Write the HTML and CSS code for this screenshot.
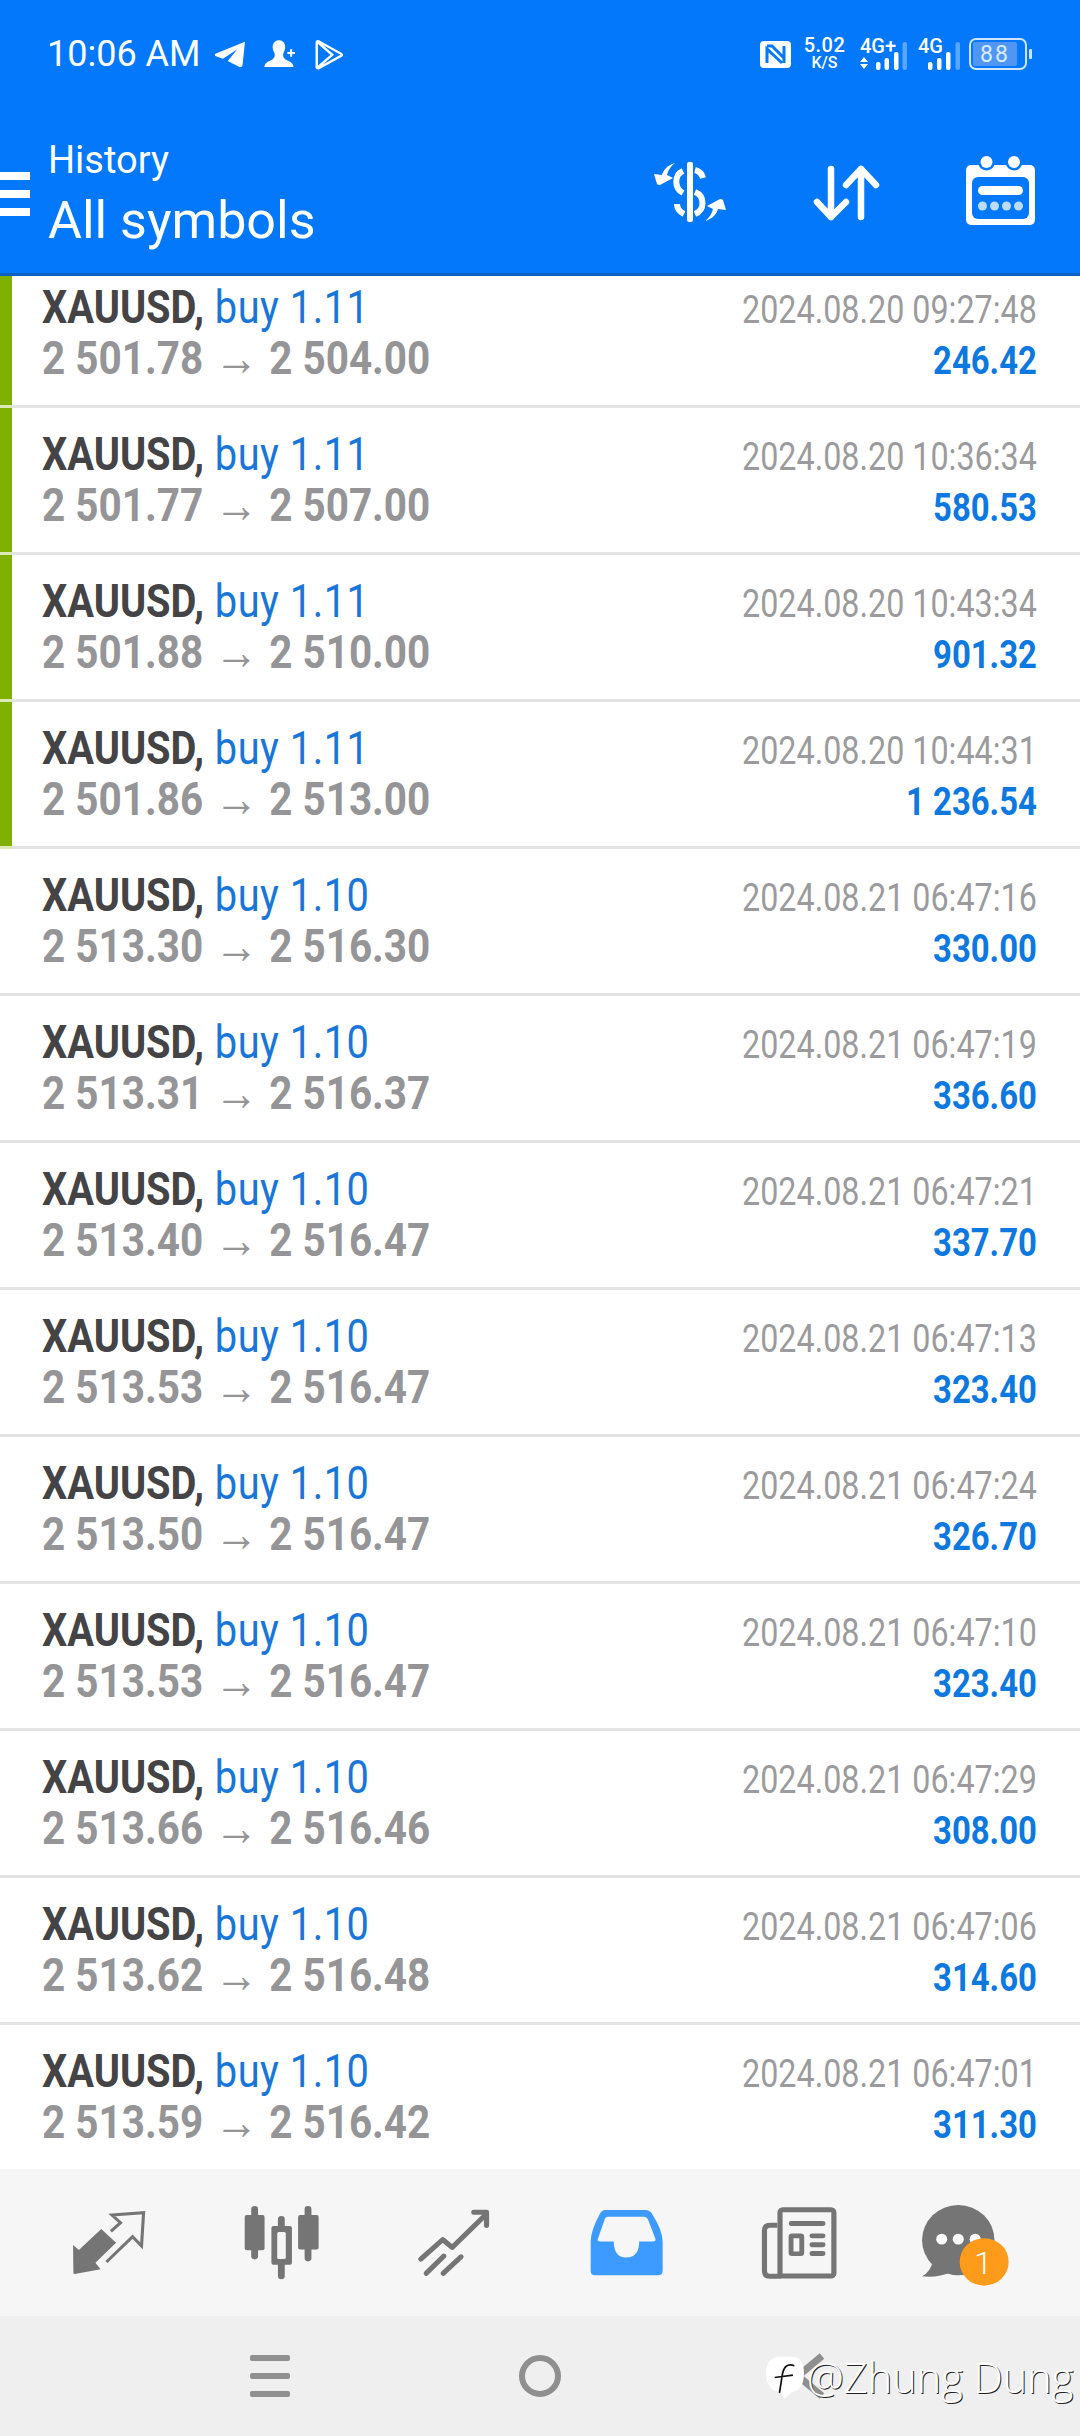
FILE: index.html
```html
<!DOCTYPE html>
<html lang="en">
<head>
    <meta charset="UTF-8">
    <title>History</title>
    <link rel="stylesheet" href="styles.css">
</head>
<body>
<div class="app">
    <header class="header">
        <div class="status">
            <div class="status-left">
                <span class="clock">10:06 AM</span>
                <svg class="ic-telegram" viewBox="625 125 90 82" preserveAspectRatio="none"><path d="M712 127 L626 164 Q622 168 628 171 L648 179 L690 150 L662 186 L696 204 Q704 206 705 198 Z"/></svg>
                <svg class="ic-person" viewBox="765 127 92 84" preserveAspectRatio="none"><path d="M808 128 C790 128 786 148 794 164 C798 172 796 180 790 185 C782 191 768 192 766 208 L850 208 C848 192 834 191 826 185 C820 180 818 172 822 164 C830 148 826 128 808 128Z"/><path d="M832 166 H854 M843 155 V177" class="thin"/></svg>
                <svg class="ic-play" viewBox="912 115 84 94" preserveAspectRatio="none"><path d="M922 122 L988 160 Q992 163 988 166 L922 204 Q917 205 917 200 V126 Q917 121 922 122Z M919 124 L962 163 L919 202" class="line"/></svg>
            </div>
            <div class="status-right">
                <svg class="ic-nfc" viewBox="0 0 31 27"><rect width="31" height="27" rx="4" fill="#fff"/><path d="M7 22 V8 L22 22 M24 5 V22 M7 5 H12 L24 17" fill="none" stroke="#0478fb" stroke-width="3"/></svg>
                <div class="speed"><span class="speed-num">5.02</span><span class="speed-unit">K/S</span></div>
                <svg class="ic-signal w47" viewBox="0 -6 47 38">
                    <text x="0" y="15" class="sig-text">4G+</text>
                    <path d="M4 19 L8 24 H0Z M4 31 L8 26 H0Z" fill="#fff"/>
                    <rect x="16" y="24" width="4.5" height="8" rx="2" fill="#fff"/>
                    <rect x="24.5" y="20" width="4.5" height="12" rx="2" fill="#fff"/>
                    <rect x="34" y="14" width="4.5" height="18" rx="2" fill="#fff"/>
                    <rect x="42.5" y="4" width="4.5" height="28" rx="2" fill="#5aa5ff"/>
                </svg>
                <svg class="ic-signal w42" viewBox="0 -6 42 38">
                    <text x="0" y="15" class="sig-text">4G</text>
                    <rect x="10" y="24" width="4.5" height="8" rx="2" fill="#fff"/>
                    <rect x="19" y="20" width="4.5" height="12" rx="2" fill="#fff"/>
                    <rect x="28" y="14" width="4.5" height="18" rx="2" fill="#fff"/>
                    <rect x="37.5" y="4" width="4.5" height="28" rx="2" fill="#5aa5ff"/>
                </svg>
                <svg class="ic-battery" viewBox="0 0 63 32">
                    <rect x="1" y="1" width="56" height="30" rx="6" fill="none" stroke="#cfe4ff" stroke-width="2"/>
                    <rect x="4" y="4" width="44" height="24" rx="2" fill="#4f96f5"/>
                    <text x="26" y="24" class="bat-text">88</text>
                    <rect x="60" y="11" width="3" height="10" rx="1" fill="#cfe4ff"/>
                </svg>
            </div>
        </div>
        <div class="toolbar">
            <div class="burger"><span></span><span></span><span></span></div>
            <div class="titles">
                <div class="title-small">History</div>
                <div class="title-big">All symbols</div>
            </div>
            <div class="actions">
                <svg class="ic-dollar" viewBox="0 0 72 60">
                    <rect x="33" y="0" width="6" height="60" rx="2" fill="#fff"/>
                    <path d="M29 9 C20 13 20 26 29 31 M41 8 C45 9 48 12 49 16 M41 30 C51 34 51 48 41 52 M23 42 C23 47 26 50 30 52" fill="none" stroke="#fff" stroke-width="6"/>
                    <path d="M21 1 C13 3 9 9 8 13 L0 12 L3 22 C4 23 5 23 6 23 L19 16 L13 13 C14 8 17 4 21 1Z" fill="#fff"/>
                    <path d="M21 1 C13 3 9 9 8 13 L0 12 L3 22 C4 23 5 23 6 23 L19 16 L13 13 C14 8 17 4 21 1Z" fill="#fff" transform="rotate(180 36 30)"/>
                </svg>
                <svg class="ic-sort" viewBox="810 160 72 62">
                    <path d="M831 169 V217 M817 202 L831 217 L846 202 M861 217 V169 M846 185 L861 169 L876 185" fill="none" stroke="#fff" stroke-width="6.5" stroke-linecap="round" stroke-linejoin="round"/>
                </svg>
                <svg class="ic-calendar" viewBox="966 153 69 72">
                    <rect x="966" y="165" width="69" height="60" rx="5" fill="#fff"/>
                    <rect x="972" y="177" width="57" height="42" rx="6" fill="#0478fb"/>
                    <circle cx="986.5" cy="162" r="8.5" fill="#0478fb"/>
                    <circle cx="1014" cy="162" r="8.5" fill="#0478fb"/>
                    <circle cx="986.5" cy="162" r="6" fill="#fff"/>
                    <circle cx="1014" cy="162" r="6" fill="#fff"/>
                    <rect x="978" y="186" width="45" height="9" rx="4.5" fill="#fff"/>
                    <circle cx="982.5" cy="206" r="4.5" fill="#bcdcff"/>
                    <circle cx="994.5" cy="206" r="4.5" fill="#bcdcff"/>
                    <circle cx="1006.5" cy="206" r="4.5" fill="#bcdcff"/>
                    <circle cx="1018.5" cy="206" r="4.5" fill="#bcdcff"/>
                </svg>
            </div>
        </div>
    </header>

    <main class="list">
        <div class="row closed first">
            <div class="deal"><b>XAUUSD,</b> <span class="side">buy 1.11</span></div>
            <div class="time">2024.08.20 09:27:48</div>
            <div class="price">2 501.78<span class="arrow">→</span>2 504.00</div>
            <div class="profit">246.42</div>
        </div>
        <div class="row closed">
            <div class="deal"><b>XAUUSD,</b> <span class="side">buy 1.11</span></div>
            <div class="time">2024.08.20 10:36:34</div>
            <div class="price">2 501.77<span class="arrow">→</span>2 507.00</div>
            <div class="profit">580.53</div>
        </div>
        <div class="row closed">
            <div class="deal"><b>XAUUSD,</b> <span class="side">buy 1.11</span></div>
            <div class="time">2024.08.20 10:43:34</div>
            <div class="price">2 501.88<span class="arrow">→</span>2 510.00</div>
            <div class="profit">901.32</div>
        </div>
        <div class="row closed">
            <div class="deal"><b>XAUUSD,</b> <span class="side">buy 1.11</span></div>
            <div class="time">2024.08.20 10:44:31</div>
            <div class="price">2 501.86<span class="arrow">→</span>2 513.00</div>
            <div class="profit">1 236.54</div>
        </div>
        <div class="row">
            <div class="deal"><b>XAUUSD,</b> <span class="side">buy 1.10</span></div>
            <div class="time">2024.08.21 06:47:16</div>
            <div class="price">2 513.30<span class="arrow">→</span>2 516.30</div>
            <div class="profit">330.00</div>
        </div>
        <div class="row">
            <div class="deal"><b>XAUUSD,</b> <span class="side">buy 1.10</span></div>
            <div class="time">2024.08.21 06:47:19</div>
            <div class="price">2 513.31<span class="arrow">→</span>2 516.37</div>
            <div class="profit">336.60</div>
        </div>
        <div class="row">
            <div class="deal"><b>XAUUSD,</b> <span class="side">buy 1.10</span></div>
            <div class="time">2024.08.21 06:47:21</div>
            <div class="price">2 513.40<span class="arrow">→</span>2 516.47</div>
            <div class="profit">337.70</div>
        </div>
        <div class="row">
            <div class="deal"><b>XAUUSD,</b> <span class="side">buy 1.10</span></div>
            <div class="time">2024.08.21 06:47:13</div>
            <div class="price">2 513.53<span class="arrow">→</span>2 516.47</div>
            <div class="profit">323.40</div>
        </div>
        <div class="row">
            <div class="deal"><b>XAUUSD,</b> <span class="side">buy 1.10</span></div>
            <div class="time">2024.08.21 06:47:24</div>
            <div class="price">2 513.50<span class="arrow">→</span>2 516.47</div>
            <div class="profit">326.70</div>
        </div>
        <div class="row">
            <div class="deal"><b>XAUUSD,</b> <span class="side">buy 1.10</span></div>
            <div class="time">2024.08.21 06:47:10</div>
            <div class="price">2 513.53<span class="arrow">→</span>2 516.47</div>
            <div class="profit">323.40</div>
        </div>
        <div class="row">
            <div class="deal"><b>XAUUSD,</b> <span class="side">buy 1.10</span></div>
            <div class="time">2024.08.21 06:47:29</div>
            <div class="price">2 513.66<span class="arrow">→</span>2 516.46</div>
            <div class="profit">308.00</div>
        </div>
        <div class="row">
            <div class="deal"><b>XAUUSD,</b> <span class="side">buy 1.10</span></div>
            <div class="time">2024.08.21 06:47:06</div>
            <div class="price">2 513.62<span class="arrow">→</span>2 516.48</div>
            <div class="profit">314.60</div>
        </div>
        <div class="row">
            <div class="deal"><b>XAUUSD,</b> <span class="side">buy 1.10</span></div>
            <div class="time">2024.08.21 06:47:01</div>
            <div class="price">2 513.59<span class="arrow">→</span>2 516.42</div>
            <div class="profit">311.30</div>
        </div>
    </main>

    <nav class="tabs">
        <svg class="tab-trade" viewBox="212 150 215 195" preserveAspectRatio="none">
            <path d="M215 255 L232 270 L297 207 L340 248 L280 308 L295 328 L220 342 Q216 342 216 338Z" fill="#757575"/>
            <path d="M325 214 L353 188 L328 165 L420 158 L414 258 L388 230 L312 306" fill="none" stroke="#757575" stroke-width="9"/>
        </svg>
        <svg class="tab-chart" viewBox="705 132 225 226" preserveAspectRatio="none">
            <rect x="729" y="135" width="20" height="161" rx="10" fill="#757575"/>
            <rect x="710" y="162" width="58" height="106" rx="6" fill="#757575"/>
            <rect x="807" y="165" width="20" height="191" rx="10" fill="#757575"/>
            <rect x="788" y="195" width="60" height="117" rx="6" fill="#757575"/>
            <rect x="805" y="213" width="25" height="82" rx="5" fill="#f6f6f6"/>
            <rect x="885" y="135" width="20" height="167" rx="10" fill="#757575"/>
            <rect x="866" y="162" width="60" height="104" rx="6" fill="#757575"/>
        </svg>
        <svg class="tab-trend" viewBox="1210 140 215 205" preserveAspectRatio="none">
            <path d="M1221 291 L1285 232 L1312 256 L1405 162 M1375 150 H1412 V190 M1237 334 L1288 282 M1286 334 L1338 284" fill="none" stroke="#757575" stroke-width="15" stroke-linecap="round" stroke-linejoin="round"/>
        </svg>
        <svg class="tab-inbox" viewBox="145 142 212 202" preserveAspectRatio="none">
            <path d="M190 145 H305 Q320 145 327 160 Q355 205 356 240 V328 Q356 342 342 342 H160 Q147 342 147 328 V240 Q148 205 172 160 Q178 145 190 145Z" fill="#3d9bff"/>
            <path d="M197 165 H300 Q310 165 314 175 L335 232 Q337 240 328 240 H288 Q288 288 250 288 Q214 288 214 240 H175 Q165 240 168 232 L187 175 Q190 165 197 165Z" fill="#f6f6f6"/>
        </svg>
        <svg class="tab-news" viewBox="645 132 220 220" preserveAspectRatio="none">
            <rect x="700" y="143" width="156" height="200" rx="8" fill="none" stroke="#757575" stroke-width="15"/>
            <path d="M692 190 H672 Q655 190 655 206 V328 Q655 344 672 344 H704" fill="none" stroke="#757575" stroke-width="15"/>
            <path d="M733 185 H824 M793 222 H824 M793 249 H824 M793 275 H824" fill="none" stroke="#757575" stroke-width="15" stroke-linecap="round"/>
            <rect x="732" y="222" width="31" height="54" rx="3" fill="none" stroke="#757575" stroke-width="14"/>
        </svg>
        <svg class="tab-chat" viewBox="1105 132 255 248" preserveAspectRatio="none">
            <circle cx="1213" cy="240" r="105" fill="#757575"/>
            <path d="M1140 300 Q1133 335 1108 348 Q1150 354 1195 335Z" fill="#757575"/>
            <circle cx="1165" cy="237" r="16" fill="#fff"/>
            <circle cx="1213" cy="237" r="16" fill="#fff"/>
            <circle cx="1262" cy="237" r="16" fill="#fff"/>
            <circle cx="1288" cy="305" r="71" fill="#ff9b1a"/>
            <text x="1285" y="340" class="badge-text">1</text>
        </svg>
    </nav>

    <div class="sysnav">
        <div class="sys-menu"><span></span><span></span><span></span></div>
        <div class="sys-home"></div>
        <svg class="sys-back" viewBox="0 0 34 46"><path d="M29 3 L5 23 L29 43" fill="none" stroke="#8f8f8f" stroke-width="7"/></svg>
    </div>

    <div class="watermark">
        <svg class="wm-logo" viewBox="652 585 116 134" preserveAspectRatio="none">
            <path d="M690 590 H735 Q765 595 765 640 Q765 690 730 695 L708 716 L700 698 Q655 690 655 640 Q655 595 690 590Z" fill="#fff"/>
            <path d="M737 617 Q708 606 702 645 L694 698 M680 652 L733 645" fill="none" stroke="#111" stroke-width="5"/>
        </svg>
        <span class="wm-text">@Zhung Dung</span>
    </div>
</div>
</body>
</html>
```

FILE: styles.css
```css
*{
    margin: 0;
    padding: 0;
    box-sizing: border-box;
}

body{
    background-color: #fff;
    font-family: Roboto, "Liberation Sans", sans-serif;
}

.app{
    position: relative;
    width: 1080px;
    height: 2436px;
    display: flex;
    flex-direction: column;
    overflow: hidden;
}

/* header */
.header{
    height: 276px;
    background-color: #0478fb;
    border-bottom: 3px solid #0b62c4;
    color: #fff;
    flex-shrink: 0;
}

.status{
    height: 108px;
    display: flex;
    justify-content: space-between;
    align-items: flex-start;
    padding: 38px 48px 0 47px;
}

.status-left{
    display: flex;
    align-items: center;
    height: 32px;
}

.clock{
    font-size: 36px;
    width: 168px;
}

.status-left svg{
    fill: #fff;
}

.ic-telegram{
    width: 31px;
    height: 27px;
}

.ic-person{
    width: 32px;
    height: 28px;
    margin-left: 18px;
}

.ic-play{
    width: 29px;
    height: 31px;
    margin-left: 19px;
}

.thin{
    fill: none;
    stroke: #fff;
    stroke-width: 6;
}

.line{
    fill: none;
    stroke: #fff;
    stroke-width: 7;
}

.status-right{
    display: flex;
    align-items: center;
    height: 32px;
}

.ic-nfc{
    width: 31px;
    height: 27px;
}

.speed{
    width: 41px;
    margin-left: 13px;
    display: flex;
    flex-direction: column;
    align-items: center;
    font-weight: 500;
    line-height: 17px;
}

.speed-num{
    font-size: 20px;
    letter-spacing: 0.5px;
}

.speed-unit{
    font-size: 16px;
}

.ic-signal{
    height: 38px;
    margin-top: -6px;
}

.w47{
    width: 47px;
    margin-left: 15px;
}

.w42{
    width: 42px;
    margin-left: 11px;
}

.sig-text{
    font-size: 20px;
    font-weight: 500;
    fill: #fff;
}

.ic-battery{
    width: 63px;
    height: 32px;
    margin-left: 9px;
}

.bat-text{
    font-size: 23px;
    fill: #dcebff;
    text-anchor: middle;
    letter-spacing: 2px;
}

.toolbar{
    display: flex;
    align-items: flex-start;
    height: 165px;
}

.burger{
    width: 30px;
    margin-top: 64px;
    display: flex;
    flex-direction: column;
    gap: 10px;
}

.burger span{
    height: 8px;
    background-color: #fff;
}

.titles{
    margin-left: 18px;
    margin-top: 28px;
}

.title-small{
    font-size: 38px;
    line-height: 48px;
}

.title-big{
    font-size: 52px;
    line-height: 60px;
    margin-top: 7px;
}

.actions{
    margin-left: auto;
    padding-right: 45px;
    height: 165px;
    display: flex;
    align-items: flex-start;
}

.ic-dollar{
    width: 72px;
    height: 60px;
    margin-top: 54px;
}

.ic-sort{
    width: 72px;
    height: 62px;
    margin-top: 52px;
    margin-left: 84px;
}

.ic-calendar{
    width: 69px;
    height: 72px;
    margin-top: 45px;
    margin-left: 84px;
}

/* deals */
.list{
    flex: 1;
    overflow: hidden;
    background-color: #fff;
}

.row{
    height: 147px;
    padding: 19px 43px 0 42px;
    display: grid;
    grid-template-columns: 1fr auto;
    grid-auto-rows: 52px;
    align-items: baseline;
    background: linear-gradient(to top, #e3e3e3 3px, #fff 3px);
}

.row.first{
    margin-top: -15px;
}

.row.closed{
    background:
        linear-gradient(to top, #dbe9b6 3px, #7fb000 3px) left top / 12px 100% no-repeat,
        linear-gradient(to top, #e3e3e3 3px, #fff 3px);
}

.deal, .price{
    font-size: 46px;
    white-space: nowrap;
    transform-origin: left center;
}

.deal{
    transform: scaleX(0.865);
}

.deal b{
    color: #444446;
    font-weight: 700;
}

.side{
    color: #1976d8;
    margin-left: 1px;
    letter-spacing: 0.6px;
}

.price{
    color: #959597;
    font-weight: 700;
    line-height: 52px;
    transform: scaleX(0.88);
}

.arrow{
    font-size: 50px;
    font-weight: 400;
    line-height: 0;
    margin: 0 12px 0 13px;
    vertical-align: -1px;
}

.time, .profit{
    font-size: 38px;
    text-align: right;
    white-space: nowrap;
    transform-origin: right center;
}

.time{
    color: #9b9b9d;
    transform: scaleX(0.85);
}

.profit{
    color: #0d78e0;
    font-weight: 700;
    transform: scaleX(0.865);
}

/* bottom tabs */
.tabs{
    height: 147px;
    flex-shrink: 0;
    background-color: #f6f6f6;
    display: grid;
    grid-template-columns: repeat(6, 172.5px);
    padding-left: 23px;
    align-items: center;
    justify-items: center;
}

.tab-trade{
    width: 74px;
    height: 65px;
}

.tab-chart{
    width: 77px;
    height: 75px;
}

.tab-trend{
    width: 74px;
    height: 68px;
}

.tab-inbox{
    width: 73px;
    height: 67px;
}

.tab-news{
    width: 76px;
    height: 73px;
}

.tab-chat{
    width: 88px;
    height: 83px;
    margin-top: 6px;
    margin-right: 14px;
}

.badge-text{
    font-size: 96px;
    font-weight: 300;
    fill: #fff;
    text-anchor: middle;
}

/* system nav */
.sysnav{
    height: 120px;
    flex-shrink: 0;
    background-color: #efefef;
    display: grid;
    grid-template-columns: repeat(3, 270px);
    padding-left: 135px;
    align-items: center;
    justify-items: center;
}

.sys-menu{
    width: 40px;
    display: flex;
    flex-direction: column;
    gap: 12px;
}

.sys-menu span{
    height: 6px;
    border-radius: 2px;
    background-color: #8f8f8f;
}

.sys-home{
    width: 42px;
    height: 42px;
    border: 6px solid #8f8f8f;
    border-radius: 50%;
}

.sys-back{
    width: 34px;
    height: 46px;
}

/* watermark on top of the nav bar */
.watermark{
    position: absolute;
    left: 765px;
    top: 2355px;
    display: flex;
    align-items: center;
    gap: 2px;
}

.wm-logo{
    width: 40px;
    height: 45px;
}

.wm-text{
    font-family: "Open Sans", sans-serif;
    font-weight: 300;
    font-size: 41.5px;
    line-height: 45px;
    color: #fff;
    text-shadow: 1px 1px 0 #222;
    white-space: nowrap;
}
```
